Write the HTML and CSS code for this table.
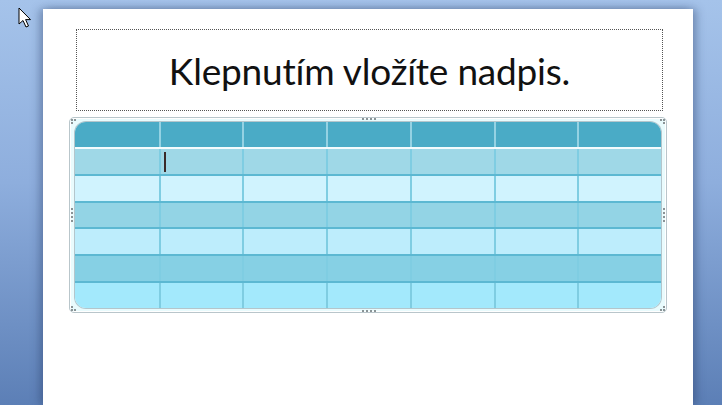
FILE: index.html
```html
<!DOCTYPE html>
<html lang="cs">
<head>
<meta charset="utf-8">
<title>Slide</title>
<link rel="stylesheet" href="styles.css">
</head>
<body>
<div class="workspace">
  <svg class="pointer" width="14" height="22" viewBox="0 0 14 22"><path d="M1 1 L1 17 L5 13.5 L8 20 L10.5 19 L7.6 12.6 L12.5 12.6 Z" fill="#fff" stroke="#000" stroke-width="1" stroke-linejoin="miter"/></svg>
  <div class="slide">
    <div class="title-box"><span class="title">Klepnutím vložíte nadpis.</span></div>
    <div class="frame">
      <span class="h h-tl"></span><span class="h h-tr"></span><span class="h h-bl"></span><span class="h h-br"></span>
      <span class="h h-t"></span><span class="h h-b"></span><span class="h h-l"></span><span class="h h-r"></span>
      <div class="grid">
        <div class="row head"><div></div><div></div><div></div><div></div><div></div><div></div><div></div></div>
        <div class="row r1"><div></div><div class="caret-cell"><span class="caret"></span></div><div></div><div></div><div></div><div></div><div></div></div>
        <div class="row r2"><div></div><div></div><div></div><div></div><div></div><div></div><div></div></div>
        <div class="row r3"><div></div><div></div><div></div><div></div><div></div><div></div><div></div></div>
        <div class="row r4"><div></div><div></div><div></div><div></div><div></div><div></div><div></div></div>
        <div class="row r5"><div></div><div></div><div></div><div></div><div></div><div></div><div></div></div>
        <div class="row r6"><div></div><div></div><div></div><div></div><div></div><div></div><div></div></div>
      </div>
    </div>
  </div>
</div>
</body>
</html>
```
FILE: styles.css
```css
html, body { margin: 0; padding: 0; }
body {
  width: 722px; height: 405px; overflow: hidden;
  background: linear-gradient(180deg, #a5c3ea 0%, #8eaedd 45%, #5c7fb6 100%);
  font-family: "Lato", "Open Sans", sans-serif;
}
.workspace { position: relative; width: 722px; height: 405px; padding-top: 9px; box-sizing: border-box; }
.pointer { position: absolute; left: 18px; top: 7px; }
.slide {
  margin-left: 43px; width: 650px; height: 396px; background: #fff;
  box-shadow: -4px 0 8px rgba(40,60,100,0.35), 4px 0 8px rgba(40,60,100,0.35);
  padding-top: 20px; box-sizing: border-box;
}
.title-box {
  margin-left: 33px; width: 587px; height: 82px; box-sizing: border-box;
  border: 1px dotted #555;
  display: flex; align-items: center; justify-content: center;
}
.title { font-size: 37px; color: #111; letter-spacing: -0.2px; padding-top: 1px; }
.frame {
  position: relative;
  margin: 6px 0 0 26px; width: 598px; height: 196px; box-sizing: border-box;
  border: 1px solid #b9c6cb; border-radius: 5px;
  background: #e9fbfd; padding: 4px 5px 4px 5px;
  box-shadow: inset 0 0 0 1px #fff;
}
.grid {
  height: 186px; border-radius: 11px; overflow: hidden;
  display: flex; flex-direction: column;
  box-shadow: 0 0 0 1px #b4c6cc;
}
.row { display: grid; grid-template-columns: repeat(7, 1fr); flex: 1; }
.row > div + div { border-left: 2px solid #7fcde2; }
.head { flex: 0 0 25px; background: #4aabc6; border-bottom: 2px solid #f3fbfd; }
.head > div + div { border-left: 2px solid #94d2e3; }
.r1 { background: #9fd8e7; }
.r2 { background: #d0f3fe; border-top: 2px solid #5cb8d2; }
.r3 { background: #93d4e5; border-top: 2px solid #5cb8d2; }
.r4 { background: #bdedfc; border-top: 2px solid #5cb8d2; }
.r5 { background: #86d0e4; border-top: 2px solid #5cb8d2; }
.r6 { background: #a3e9fc; border-top: 2px solid #5cb8d2; }
.caret-cell { position: relative; }
.caret { position: absolute; left: 3px; top: 3px; width: 2px; height: 20px; background: #3a2a2a; }
.h { position: absolute; width: 2px; height: 2px; background: #8a9396; }
.h-tl { left: 1px; top: 1px; box-shadow: 3px 0 0 #8a9396, 0 3px 0 #8a9396; }
.h-tr { right: 1px; top: 1px; box-shadow: -3px 0 0 #8a9396, 0 3px 0 #8a9396; }
.h-bl { left: 1px; bottom: 1px; box-shadow: 3px 0 0 #8a9396, 0 -3px 0 #8a9396; }
.h-br { right: 1px; bottom: 1px; box-shadow: -3px 0 0 #8a9396, 0 -3px 0 #8a9396; }
.h-t { left: 292px; top: 0; box-shadow: 4px 0 0 #8a9396, 8px 0 0 #8a9396, 12px 0 0 #8a9396; }
.h-b { left: 292px; bottom: 0; box-shadow: 4px 0 0 #8a9396, 8px 0 0 #8a9396, 12px 0 0 #8a9396; }
.h-l { left: 1px; top: 90px; box-shadow: 0 4px 0 #8a9396, 0 8px 0 #8a9396, 0 12px 0 #8a9396; }
.h-r { right: 1px; top: 90px; box-shadow: 0 4px 0 #8a9396, 0 8px 0 #8a9396, 0 12px 0 #8a9396; }
```
